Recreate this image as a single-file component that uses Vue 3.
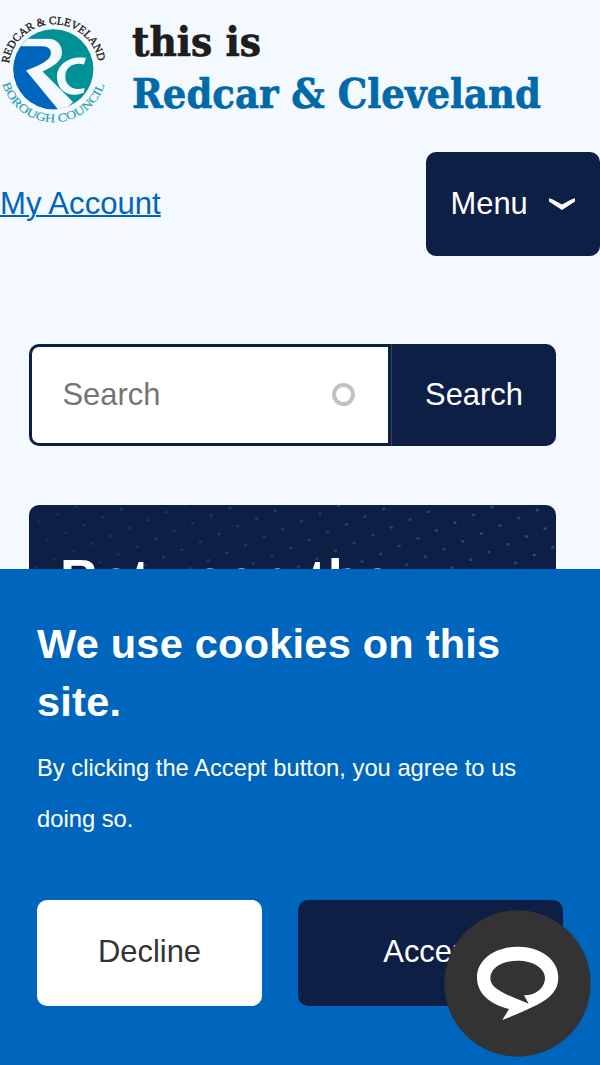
<script setup>
// Dots of the hero texture: a square lattice turned by about 23 degrees
const dots = []
for (let i = -26; i <= 14; i++) {
  for (let j = -14; j <= 14; j++) {
    const x = 336 + i * 18.6 + j * 7.8
    const y = 11.7 - i * 7.8 + j * 18.6
    if (x > 0 && x < 527 && y > -2 && y < 70) {
      dots.push({ x, y, o: 0.2 + 0.35 * (x / 527) })
    }
  }
}
</script>

<template>
  <div class="page">
    <header class="brand">
      <svg class="logo" width="600" height="130" viewBox="0 0 600 130">
        <defs>
          <path id="arc-top" d="M8.8 63.5A45.3 45.3 0 0 1 98.6 63.5" />
          <path id="arc-bottom" d="M2.4 84A53.4 53.4 0 0 0 104.8 84" />
          <clipPath id="disc"><circle cx="53.4" cy="69.2" r="40" /></clipPath>
        </defs>
        <g clip-path="url(#disc)">
          <rect x="10" y="26" width="86" height="86" fill="#009295" />
          <path d="M10 38H50V62L32 69L62 112H10Z" fill="#0065bd" />
          <path class="w" d="M14 38.7H48C57 38.7 62 45 62 52.5C62 61 54 66 42.5 71.5L73 102L61 113L26 70.5C40 65 51 60 51 53.5C51 48 47 46.3 40 46.3H14Z" />
          <path class="w" d="M86 58C70 55.5 57 64 57 77C57 91 70 99 84 92.5L84.5 88C74 91.5 65.3 86 65.3 76.5C65.3 67 74 61.5 84 64.5Z" />
        </g>
        <text class="ring dark" font-size="11.2"><textPath href="#arc-top" textLength="128" lengthAdjust="spacingAndGlyphs">REDCAR &amp; CLEVELAND</textPath></text>
        <text class="ring teal" font-size="11.8"><textPath href="#arc-bottom" textLength="136" lengthAdjust="spacingAndGlyphs">BOROUGH COUNCIL</textPath></text>
        <text class="word ink" x="132" y="56" textLength="129" lengthAdjust="spacingAndGlyphs">this is</text>
        <text class="word blue" x="132" y="107.6" textLength="409" lengthAdjust="spacingAndGlyphs">Redcar &amp; Cleveland</text>
      </svg>
    </header>

    <nav class="bar">
      <a class="account">My Account</a>
      <button class="menu">
        Menu
        <svg width="28" height="14" viewBox="0 0 28 14"><path d="M1 1.2Q2 .6 14 7.6Q26 .6 27 1.2L27 4.5L14 13L1 4.5Z" fill="#fff" /></svg>
      </button>
    </nav>

    <form class="search">
      <div class="field"><span>Search</span><i class="throbber"></i></div>
      <div class="go">Search</div>
    </form>

    <section class="hero">
      <svg class="texture" width="527" height="70">
        <ellipse v-for="(d, n) in dots" :key="n" :cx="d.x" :cy="d.y" rx="1.7" ry="1.4" fill="#0f8f8c" :opacity="d.o" />
      </svg>
      <h1>Between the</h1>
    </section>

    <aside class="cookies">
      <h2>We use cookies on this site.</h2>
      <p>By clicking the Accept button, you agree to us doing so.</p>
      <div class="actions">
        <button class="decline">Decline</button>
        <button class="accept">Accept</button>
      </div>
    </aside>

    <svg class="chat" width="147" height="147" viewBox="73 76 441 441">
      <circle cx="293.5" cy="296.5" r="219.5" fill="#333" />
      <path fill="#fff" fill-rule="evenodd" d="M172 278C172 225 225 186 294 186C363 186 416 225 416 278C416 316 394 339 353 360Q300 386 248 406L268 373C207 358 172 325 172 278ZM212 280C212 312 252 327 327 357L313 332C352 332 376 307 376 280C376 250 340 228 294 228C248 228 212 250 212 280Z" />
    </svg>
  </div>
</template>

<style>
body {
  background: #f4f9ff;
}
</style>

<style scoped>
.page {
  position: relative;
  width: 600px;
  height: 1065px;
  overflow: hidden;
  background: #f4f9ff;
  font-family: "Liberation Sans", Arial, sans-serif;
  font-size: 30.9px;
}
.brand { height: 152px; }
.logo { display: block; overflow: visible; }
.w { fill: #f4f9ff; }
.ring { font-family: "Liberation Serif", serif; }
.dark { fill: #1d1d1b; stroke: #1d1d1b; stroke-width: 0.35; }
.teal { fill: #2a9fae; stroke: #2a9fae; stroke-width: 0.15; }
.word { font: bold 41px "DejaVu Serif", serif; stroke-width: 0.7; }
.ink { fill: #1d1d1b; stroke: #1d1d1b; }
.blue { fill: #0069a8; stroke: #0069a8; }
button {
  margin: 0;
  padding: 0;
  border: 0;
  font: inherit;
  border-radius: 10px;
}
.bar {
  display: flex;
  justify-content: space-between;
  align-items: center;
  height: 104px;
}
.account {
  color: #0065bd;
  text-decoration: underline;
  text-decoration-thickness: 2px;
  line-height: 36px;
  font-size: 31.1px;
}
.menu {
  display: flex;
  align-items: center;
  gap: 20px;
  box-sizing: border-box;
  width: 174px;
  height: 104px;
  padding-left: 24.5px;
  background: #0e1f45;
  color: #fff;
}
.search {
  display: flex;
  width: 527px;
  height: 102px;
  margin: 88px 0 0 29px;
}
.field {
  display: flex;
  align-items: center;
  justify-content: space-between;
  box-sizing: border-box;
  width: 362px;
  padding: 0 33.5px 0 30.5px;
  border: 3px solid #0e1f45;
  border-radius: 10px 0 0 10px;
  background: #fff;
  color: #757575;
}
.throbber {
  box-sizing: border-box;
  width: 23px;
  height: 23px;
  margin-bottom: 2px;
  border: 4px solid #c2c2c2;
  border-radius: 50%;
}
.go {
  display: flex;
  align-items: center;
  justify-content: center;
  flex: 1;
  border-left: 1px solid #33415f;
  border-radius: 0 10px 10px 0;
  background: #0e1f45;
  color: #fff;
}
.hero {
  position: relative;
  width: 527px;
  height: 300px;
  margin: 59px 0 0 29px;
  border-radius: 10px;
  overflow: hidden;
  background: #0e1f45;
}
.texture {
  position: absolute;
  left: 0;
  top: 0;
}
h1 {
  position: relative;
  margin: 0;
  padding: 41px 0 0 31px;
  color: #fff;
  font-size: 54px;
  line-height: 64px;
  letter-spacing: 1.4px;
}
.cookies {
  position: absolute;
  left: 0;
  right: 0;
  bottom: 0;
  box-sizing: border-box;
  height: 496px;
  padding: 46px 37px 0;
  background: #0065bd;
  color: #fff;
}
h2 {
  margin: 0;
  font-size: 41.5px;
  line-height: 58px;
  letter-spacing: 0.24px;
}
p {
  margin: 11px 0 0;
  font-size: 23.75px;
  line-height: 51px;
}
.actions {
  display: flex;
  gap: 36px;
  margin-top: 56px;
}
.actions button {
  height: 106px;
  padding-bottom: 2px;
}
.decline {
  width: 225px;
  background: #fff;
  color: #333;
}
.accept {
  width: 265px;
  background: #0e1f45;
  color: #fff;
}
.chat {
  position: absolute;
  left: 444px;
  top: 910px;
}
</style>
